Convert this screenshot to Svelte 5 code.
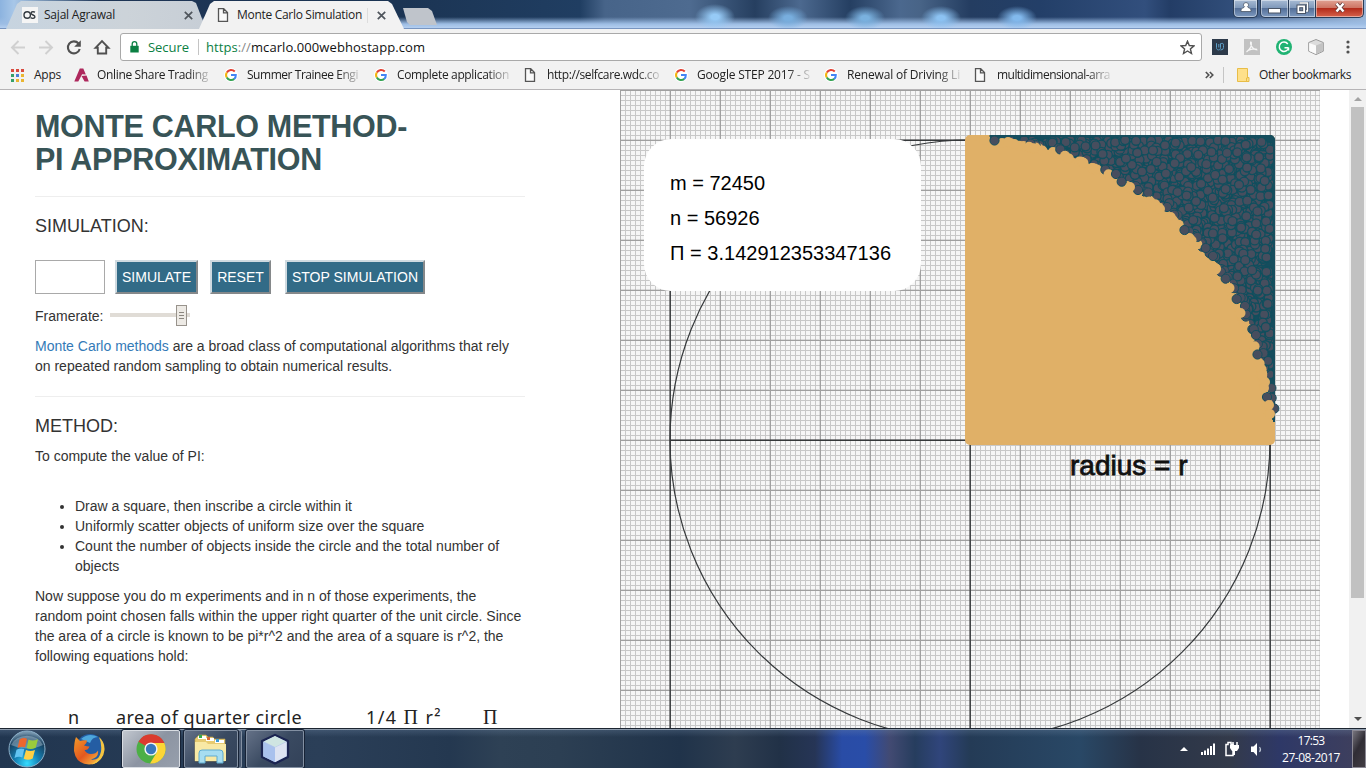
<script>
  // Spreads the letters of a label so that it takes up exactly `width` pixels.
  function fit(node, width) {
    node.style.letterSpacing = '0px';
    const natural = node.getBoundingClientRect().width;
    const count = [...node.textContent].length;
    node.style.letterSpacing = `${(width - natural) / count}px`;
  }

  const bookmarks = [
    ['axis', 'Online Share Trading', 111],
    ['google', 'Summer Trainee Engi', 111],
    ['google', 'Complete application', 112],
    ['page', 'http://selfcare.wdc.co', 112],
    ['google', 'Google STEP 2017 - S', 113],
    ['google', 'Renewal of Driving Li', 113],
    ['page', 'multidimensional-arra', 113]
  ];
  const appColors = ['#d94b3f', '#d94b3f', '#d94b3f', '#35a06a', '#4a80d8', '#eab530', '#35a06a', '#eab530', '#eab530'];

  let seed = 20170827;
  function random() {
    seed = (seed * 1664525 + 1013904223) % 4294967296;
    return seed / 4294967296;
  }

  const cx = 970;
  const cy = 440;
  const r = 300;

  const outside = [];
  while (outside.length < 1700) {
    const x = random() * r;
    const y = random() * r;
    if (x * x + y * y > (r + 2) * (r + 2)) outside.push([cx + x, cy - y]);
  }

  const rim = [];
  for (let i = 0; i < 130; i++) {
    const a = 0.1 + random() * 1.36;
    const inside = random() < 0.74;
    const d = inside ? r - random() * 2 : r + 2 + random() * 4;
    rim.push([cx + d * Math.cos(a), cy - d * Math.sin(a), inside]);
  }
  rim.push(
    [1116, 174, false], [1121.7, 181.7, false], [1138, 190, false], [1130, 187, true],
    [1146.5, 204, true], [1167, 207, false], [1160, 209, true], [1175, 224, true],
    [1184.5, 230, false], [1191.6, 240.5, true], [1205.7, 248, false], [1213, 256, false],
    [1212.5, 266, true], [1225.7, 278.7, false], [1229.5, 288, true], [1236.7, 299, false],
    [1245, 306, false], [1240.5, 313, true], [1257.5, 354.5, false], [1267, 397, false],
    [1265, 382, true], [1264, 388, true], [1269, 405, true], [1270, 414, true], [1002, 143, true], [1008, 142, true],
    [984, 140, true], [994.5, 140.5, false]
  );
</script>

{#snippet google()}
  <svg class="ico" width="14" height="14" viewBox="0 0 14 14">
    <circle cx="7" cy="7" r="7" fill="#fff" />
    <path d="M10.8 3.5A5 5 0 0 0 2.8 4.5" fill="none" stroke="#e34234" stroke-width="2" />
    <path d="M2.8 4.4A5 5 0 0 0 2.8 9.6" fill="none" stroke="#f3b50c" stroke-width="2" />
    <path d="M2.8 9.5A5 5 0 0 0 10.3 10.9" fill="none" stroke="#34a353" stroke-width="2" />
    <path d="M7 7h4.8A5 5 0 0 1 10.2 11" fill="none" stroke="#4285f4" stroke-width="2" />
  </svg>
{/snippet}

{#snippet page()}
  <svg class="ico" width="12" height="14" viewBox="0 0 12 14">
    <path d="M1.5.7h5.2l3.8 3.9v8.7h-9zM6.5.9v4h4" fill="#fafafa" stroke="#555" stroke-width="1.3" />
  </svg>
{/snippet}

{#snippet cross()}
  <svg width="9" height="9" viewBox="0 0 9 9"><path d="M.8.8l7.4 7.4M8.2.8L.8 8.2" stroke="#4f555c" stroke-width="1.7" /></svg>
{/snippet}

<div class="screen">
  <header class="titlebar">
    <div class="tab idle">
      <svg class="os" width="16" height="16" viewBox="0 0 16 16">
        <rect width="16" height="16" fill="#f5f5f5" />
        <circle cx="5.2" cy="8" r="3.2" fill="none" stroke="#333a40" stroke-width="1.4" />
        <path d="M13 5.2C10.500 4 8.500 5.200 9.400 6.900 10.200 8.200 13.200 8 12.900 10 12.500 11.800 10 11.600 8.600 10.700" fill="none" stroke="#333a40" stroke-width="1.4" />
      </svg>
      <span class="tabname"><span use:fit={71}>Sajal Agrawal</span></span>
      {@render cross()}
    </div>
    <div class="tab live">
      {@render page()}
      <span class="tabname"><span use:fit={125}>Monte Carlo Simulation</span><i class="bar"></i></span>
      {@render cross()}
    </div>
    <div class="newtab"></div>
    <div class="controls">
      <div class="ctl user">
        <svg width="12" height="11" viewBox="0 0 12 11"><path d="M6 .6a2.300 2.300 0 0 1 1.500 4.200c0 1 3.500 1.200 3.500 3.200v1.500H1V8c0-2 3.500-2.200 3.500-3.200A2.300 2.300 0 0 1 6 .6z" fill="#fff" stroke="#4a5566" stroke-width=".8" /></svg>
      </div>
      <div class="group">
        <div class="ctl min"><svg width="13" height="6" viewBox="0 0 13 6"><rect x=".5" y=".5" width="12" height="4.500" fill="#fff" stroke="#4a5566" /></svg></div>
        <div class="ctl max">
          <svg width="13" height="13" viewBox="0 0 13 13">
            <path d="M3.500 1h8v8h-2" fill="none" stroke="#4a5566" stroke-width="2.600" /><path d="M3.500 1h8v8h-2" fill="none" stroke="#fff" stroke-width="1.300" />
            <rect x="1" y="3" width="8.500" height="8.500" fill="#fff" stroke="#4a5566" /><rect x="3.700" y="5.700" width="3" height="3" fill="#7186a5" stroke="#4a5566" />
          </svg>
        </div>
        <div class="ctl close"><svg width="12" height="11" viewBox="0 0 12 11"><path d="M2.500 1.500l7 8M9.500 1.500l-7 8" stroke="#5c3535" stroke-width="4" /><path d="M2.500 1.500l7 8M9.500 1.500l-7 8" stroke="#fff" stroke-width="2.500" /></svg></div>
      </div>
    </div>
  </header>

  <div class="toolbar">
    <svg class="nav" width="112" height="33" viewBox="0 0 112 33">
      <g fill="none" stroke="#d0d0d0" stroke-width="1.900"><path d="M25 18.500H12.500M18.500 12l-6.500 6.500 6.500 6.500" /><path d="M39 18.500h12.500M45.500 12l6.500 6.500-6.500 6.500" /></g>
      <path d="M78.500 14.500a6 6 0 1 0 1.200 5.500" fill="none" stroke="#505050" stroke-width="2.100" />
      <path d="M80.800 11.200v6.600h-6.600z" fill="#505050" />
      <path d="M95.500 18.800L102 12l6.500 6.800h-2.300v5.700h-8.400v-5.700z" fill="none" stroke="#505050" stroke-width="1.900" />
    </svg>
    <div class="omnibox">
      <svg width="9" height="12" viewBox="0 0 9 12"><path d="M.3 4.800h8.400V11.500H.3z" fill="#0b8043" /><path d="M2.200 5V3a2.300 2.300 0 0 1 4.600 0v2" fill="none" stroke="#0b8043" stroke-width="1.300" /></svg>
      <span class="secure"><span use:fit={41}>Secure</span></span>
      <i class="sep"></i>
      <span class="url"><span use:fit={219}><b>https</b><em>://</em>mcarlo.000webhostapp.com</span></span>
      <svg class="star" width="15" height="15" viewBox="0 0 15 15"><path d="M7.500 1.200l1.800 4.300 4.600.4-3.500 3 1.100 4.600-4-2.500-4 2.500 1.100-4.600-3.500-3 4.600-.4z" fill="none" stroke="#505050" stroke-width="1.400" /></svg>
    </div>
    <div class="extensions">
      <svg width="16" height="16" viewBox="0 0 16 16"><rect width="16" height="16" fill="#2d3a4a" /><path d="M4.500 4.200v4.500c0 3 4 3 4 0V4.500M6.800 5v3.500M8.500 5q3-2 3 1.500v2q0 2.500-3 2.500" fill="none" stroke="#5da0c8" stroke-width="1" /></svg>
      <svg width="16" height="16" viewBox="0 0 16 16"><rect width="16" height="16" fill="#c2c2c2" /><path d="M2.500 13C5 11 8 7 7.300 3.500c-.4-1.400-1.200.2-.5 2C7.700 8.500 10 10.600 13.500 11M4 11.500c3-1.500 6-2 9-1.200" fill="none" stroke="#f6f6f6" stroke-width="1.200" /></svg>
      <svg width="16" height="16" viewBox="0 0 16 16"><circle cx="8" cy="8" r="8" fill="#20b373" /><path d="M11.800 5A4.700 4.700 0 1 0 12.600 8.500M8.500 8.800h4M12.500 8.500v3" fill="none" stroke="#fff" stroke-width="1.500" /></svg>
      <svg width="16" height="16" viewBox="0 0 16 16"><path d="M8 .5l7.300 3v8.700L8 15.600.7 12.200V3.500z" fill="#dcdcdc" stroke="#999" /><path d="M1.200 4L8 6.600v8.400l-6.800-3z" fill="#fafafa" /><path d="M8 6.600l6.800-2.800v8.200L8 15z" fill="#c2c2c2" /></svg>
      <svg class="menu" width="4" height="14" viewBox="0 0 4 14"><g fill="#505050"><circle cx="2" cy="2" r="1.600" /><circle cx="2" cy="7" r="1.600" /><circle cx="2" cy="12" r="1.600" /></g></svg>
    </div>
  </div>

  <nav class="bookmarks">
    <div class="apps">
      <div class="appgrid">{#each appColors as c}<i style:background={c}></i>{/each}</div>
      <span use:fit={27}>Apps</span>
    </div>
    {#each bookmarks as [kind, name, width]}
      <div class="mark">
        <div class="slot">
          {#if kind === 'google'}{@render google()}{:else if kind === 'page'}{@render page()}{:else}
            <svg class="ico" width="15" height="14" viewBox="0 0 15 14"><path d="M5.800.5h3.500l2.500 6-3.700-.3L4.300 13.500H.3z M7.500 8l5-.6 2.300 6.100h-4.200z" fill="#ae285d" /></svg>
          {/if}
        </div>
        <span class="fade"><span use:fit={width}>{name}</span></span>
      </div>
    {/each}
    <div class="more">
      <svg width="9" height="8" viewBox="0 0 9 8"><path d="M.8 1l3 3-3 3M4.800 1l3 3-3 3" fill="none" stroke="#505050" stroke-width="1.600" /></svg>
      <i class="rule"></i>
      <svg width="13" height="14" viewBox="0 0 13 14"><path d="M.5.500h10v9h1.500v4H.500z" fill="#fee08a" stroke="#e8bd47" /><path d="M9.500 13v-3h1V1" fill="none" stroke="#e8bd47" /></svg>
      <span use:fit={92}>Other bookmarks</span>
    </div>
  </nav>

  <main>
    <article>
      <h2><span use:fit={372}>MONTE CARLO METHOD-</span><br /><span use:fit={287}>PI APPROXIMATION</span></h2>
      <hr />
      <h4>SIMULATION:</h4>
      <div class="form">
        <input type="text" aria-label="Points" />
        <button class="b1">SIMULATE</button>
        <button class="b2">RESET</button>
        <button class="b3">STOP SIMULATION</button>
      </div>
      <div class="rate">
        <span>Framerate:</span>
        <div class="track"><div class="thumb"><i></i><i></i><i></i></div></div>
      </div>
      <p class="intro"><a href="#top">Monte Carlo methods</a> are a broad class of computational algorithms that rely<br />on repeated random sampling to obtain numerical results.</p>
      <hr />
      <h4>METHOD:</h4>
      <p class="compute">To compute the value of PI:</p>
      <ul>
        <li>Draw a square, then inscribe a circle within it</li>
        <li>Uniformly scatter objects of uniform size over the square</li>
        <li>Count the number of objects inside the circle and the total number of<br />objects</li>
      </ul>
      <p>Now suppose you do m experiments and in n of those experiments, the<br />random point chosen falls within the upper right quarter of the unit circle. Since<br />the area of a circle is known to be pi*r^2 and the area of a square is r^2, the<br />following equations hold:</p>
      <div class="formula">
        <span class="f1">n</span>
        <span class="f2"><span use:fit={186}>area of quarter circle</span></span>
        <span class="f3"><span use:fit={76}>1/4 <b>Π</b> r²</span></span>
        <span><b>Π</b></span>
      </div>
    </article>

    <svg class="plot" width="700" height="638" viewBox="620 90 700 638">
      <defs>
        <pattern id="minor" x="620" y="90" width="5" height="5" patternUnits="userSpaceOnUse">
          <rect width="5" height="5" fill="#f6f6f6" /><path d="M0 0h5v1H0zM0 0h1v5H0z" fill="#c8c8c8" />
        </pattern>
        <pattern id="major" x="619" y="89" width="50" height="50" patternUnits="userSpaceOnUse">
          <path d="M0 0h50v2H0zM0 0h2v50H0z" fill="#999" opacity=".3" />
          <path d="M0 1h50v1H0zM1 0h1v50H1z" fill="#a0a0a0" />
        </pattern>
      </defs>
      <rect x="620" y="90" width="700" height="638" fill="url(#minor)" />
      <rect x="620" y="90" width="700" height="638" fill="url(#major)" />
      <g fill="none" stroke="#36393b" stroke-width="1.400">
        <path d="M670.200 728V140.200H1270.200V728M670 440.200H970.200M970.200 440V728" />
        <circle cx="970" cy="440" r="300" stroke-width="1.200" />
      </g>
      <rect x="644" y="139" width="277" height="152" rx="27" fill="#fff" />
      <g class="stats">
        <text x="670" y="190">m = 72450</text>
        <text x="670" y="225">n = 56926</text>
        <text x="670" y="260" textLength="221">Π = 3.142912353347136</text>
      </g>
      <rect x="965" y="135" width="310" height="310" rx="5" fill="#e0b067" />
      <path d="M990 135H1270a5 5 0 0 1 5 5V420H1270A300 300 0 0 0 990 140.500z" fill="#154d5d" />
      {#each outside as [x, y]}<circle cx={x} cy={y} r="4.500" fill="#474e5e" stroke="#104f5e" stroke-width="1.300" />{/each}
      <path d="M965 440V140H970A301 301 0 0 1 1273 440z" fill="#e0b067" />
      <path d="M989.500 135H1270a5 5 0 0 1 5 5V422h-2V137H989.500z" fill="#154d5d" />
      {#each rim as [x, y, inside]}
        <circle cx={x} cy={y} r={inside ? 5 : 4.600} fill={inside ? '#e0b067' : '#474e5e'} stroke={inside ? 'none' : '#154d5d'} stroke-width="1" />
      {/each}
      <text class="radius" x="1070" y="475">radius = r</text>
    </svg>

    <div class="scroll">
      <i class="up"></i>
      <div class="grip"></div>
      <i class="down"></i>
    </div>
  </main>

  <footer>
    <div class="launch">
      <svg class="orb" width="38" height="38" viewBox="0 0 38 38">
        <defs>
          <radialGradient id="orb" cx=".5" cy=".9" r=".85"><stop offset="0" stop-color="#35dcff" /><stop offset=".4" stop-color="#1581b5" /><stop offset=".8" stop-color="#17405f" /><stop offset="1" stop-color="#7493ab" /></radialGradient>
        </defs>
        <circle cx="19" cy="19" r="18" fill="url(#orb)" stroke="#8db1ca" />
        <path d="M3 15a17 14 0 0 1 32 0q-15 7-32 0" fill="#c7d9e6" opacity=".4" />
        <path d="M11.500 9.500q4-2.500 7.500-.8l-2 8.500q-3.500-1.300-7.500.8z" fill="#ec672e" />
        <path d="M20.500 9.500q4 2 9.500-.3l-2.300 8.500q-5 2.300-9 .3z" fill="#9acb3b" />
        <path d="M8.500 19.700q4-2 7.800-.7l-2 8.500q-3.500-1.700-7.800.5z" fill="#62c4f2" />
        <path d="M18 20q4 2 9 0l-2.300 8.500q-4.500 2.300-9 .3z" fill="#ffd044" />
      </svg>
      <svg class="fox" width="32" height="32" viewBox="0 0 32 32">
        <defs><linearGradient id="fox" x2="1" y2="1"><stop offset="0" stop-color="#f29a28" /><stop offset=".5" stop-color="#e4581f" /><stop offset="1" stop-color="#ffd94d" /></linearGradient></defs>
        <circle cx="17" cy="15" r="14" fill="#245da3" /><path d="M8 6Q16-1 25 4q-6 0-8 6z" fill="#4da7dc" />
        <path d="M3 4l4 4q3-1 7-.5 0 3-3 5 3 1 5.500 1-1.500 4-5 3.500 2 4 6.500 4 5 0 7-3.500 1 7-7 9 7 1 12-6-3 11-14 11Q3 31 1 18 1 9 3 4z" fill="url(#fox)" />
        <path d="M26 4q6 5 5.500 13-1 11-13 14.500 8-5 9.500-13 1-8-2-14.500z" fill="#f5c440" />
      </svg>
      <div class="task current">
        <svg width="30" height="30" viewBox="0 0 30 30">
          <circle cx="15" cy="15" r="14.500" fill="#4caf45" />
          <path d="M15 15L2.500 7.700A14.500 14.500 0 0 1 28.500 9H15z" fill="#db3b2f" />
          <path d="M15 9h13.300A14.500 14.500 0 0 1 14 29.500L21 18z" fill="#fcd535" />
          <circle cx="15" cy="15" r="6.600" fill="#f4f4f4" /><circle cx="15" cy="15" r="5.200" fill="#3778bd" />
        </svg>
      </div>
      <div class="task stack">
        <svg width="34" height="32" viewBox="0 0 34 32">
          <path d="M3 4l2-2h7l2 2h5l1 2h11v22H1V6z" fill="#e7cb70" stroke="#bfa34e" stroke-width=".6" />
          <path d="M4 3h8v3H4zM12 5h8v3h-8zM21 7h9v3h-9z" fill="#fff" /><path d="M5 2h3v3H5z" fill="#35a94a" /><path d="M13 4h3v3h-3z" fill="#d86632" /><path d="M22 6h3v3h-3z" fill="#3d9bd4" />
          <path d="M1 9h11l2 2h18v17H1z" fill="#f8e9a5" />
          <path d="M5 30V20q0-3 3-3h18q3 0 3 3v10h-6v-7H11v7z" fill="#a7ddf0" stroke="#5eabd0" />
        </svg>
      </div>
      <div class="task">
        <svg width="32" height="32" viewBox="0 0 32 32">
          <path d="M16 2l13 6v16L16 30.500 3 24V8z" fill="#b6c9eb" stroke="#1b2451" stroke-width="2.300" stroke-linejoin="round" />
          <path d="M16 3l11 5.500L16 14 5 8.500z" fill="#cfe5e2" /><path d="M4.500 9L16 14.500V29L4.500 23.500z" fill="#a9c1ed" /><path d="M16 14.500L27.500 9v14L16 29z" fill="#dde3f2" />
        </svg>
      </div>
    </div>
    <div class="tray">
      <svg width="84" height="18" viewBox="0 0 84 18">
        <path d="M0 11l4-4 4 4z" fill="#fff" />
        <path d="M21 12h2v3h-2zM24 10.500h2V15h-2zM27 8.500h2V15h-2zM30 6h2v9h-2zM33 3.500h2V15h-2z" fill="#fff" />
        <path d="M48 2.500h3v2h2v11h-7v-11h2z" fill="none" stroke="#fff" stroke-width="1.500" />
        <path d="M53 2v3M57 2v3" stroke="#fff" stroke-width="1.500" /><path d="M50 5h9v3l-2 3h-2v4h-2v-4h-1l-2-3z" fill="#fff" />
        <path d="M71 6.500h2.500L77 3v13l-3.500-4H71z" fill="#fff" /><path d="M79.500 7q2 2.500 0 5" fill="none" stroke="#b9c3d2" stroke-width="1.200" />
      </svg>
      <div class="clock"><span use:fit={27}>17:53</span><span use:fit={58}>27-08-2017</span></div>
      <div class="peek"></div>
    </div>
  </footer>
</div>

<style>
  :global(body) { margin: 0; overflow: hidden; background: #fff; }
  .screen { width: 1366px; height: 768px; display: flex; flex-direction: column; overflow: hidden; font: 12px/16px "Open Sans", "Noto Sans", sans-serif; color: #222; }
  .screen :global(svg) { display: block; flex: none; }
  span { white-space: nowrap; }

  .titlebar {
    height: 29px; box-sizing: border-box; display: flex; align-items: flex-start; border-bottom: 1px solid #7895c0;
    background:
      radial-gradient(ellipse 20px 13px at 715px 17px, #96caf6 20%, transparent),
      radial-gradient(ellipse 20px 12px at 788px 18px, #78aede 20%, transparent),
      radial-gradient(ellipse 20px 12px at 865px 18px, #7ab1df 20%, transparent),
      radial-gradient(ellipse 20px 12px at 941px 18px, #8cc2f2 20%, transparent),
      radial-gradient(ellipse 20px 12px at 1017px 18px, #82b9ed 20%, transparent),
      linear-gradient(180deg, transparent 17px, #9dbde4 24px, #b5cff0 28px),
      linear-gradient(90deg, #8cb3df, #a8c7e8 14px, #1e3555 100px, #1b3453 400px, #203e62 580px, #476489 605px, #4e6b90 690px, #263f60 755px, #4c698f 800px, #253f62 850px, #4b688e 900px, #486487 920px, #243d61 970px, #233f68 1040px, #324f7d 1145px, #233d66 1170px, #314e7a 1233px, #99b5d7);
  }
  .tab { height: 28px; margin-top: 1px; box-sizing: border-box; display: flex; align-items: center; }
  .idle { width: 200px; margin-left: 6px; padding-left: 16px; background: linear-gradient(90deg, #c7d4e0, #ccd3d9 60%, #c7ced6); clip-path: polygon(0 100%, 11px 3px, 15px 0, 186px 0, 190px 2px, 200px 100%); }
  .live { width: 205px; margin-left: -7px; padding-left: 18px; background: #f2f2f2; clip-path: polygon(0 100%, 11px 3px, 15px 0, 189px 0, 193px 3px, 205px 100%); }
  .tab .tabname { width: 140px; margin-left: 6px; display: flex; align-items: center; }
  .live .tabname { width: 132px; margin-left: 8px; margin-right: 8px; }
  .live .bar { width: 1px; height: 15px; background: #ddd; margin-left: 5px; }
  .newtab { width: 34px; height: 17px; margin: 8px 0 0 -1px; background: #bfc4cb; clip-path: polygon(0 0, 25px 0, 29px 3px, 34px 100%, 7px 100%, 4px 14px); }
  .controls { margin-left: auto; margin-right: 2px; display: flex; gap: 2px; }
  .ctl { box-sizing: border-box; height: 18px; display: flex; align-items: center; justify-content: center; border: 1px solid #2a3d58; border-top: 0; background: linear-gradient(#a7bbd4, #8099bb 45%, #546f98 50%, #7e9ac0); box-shadow: inset 0 0 0 1px rgba(255, 255, 255, .45); }
  .user { width: 25px; border-radius: 0 0 5px 5px; padding-bottom: 2px; }
  .group { display: flex; }
  .min { width: 29px; border-radius: 0 0 0 5px; padding-top: 4px; }
  .max { width: 27px; border-left: 0; padding-bottom: 1px; }
  .close { width: 48px; border-left: 0; border-radius: 0 0 5px 0; background: linear-gradient(#e0a293, #ce7564 45%, #b32c1b 50%, #d6624c); padding-bottom: 2px; }

  .toolbar { height: 33px; display: flex; align-items: flex-start; background: #f2f2f2; }
  .nav { width: 112px; height: 33px; margin-right: 8px; }
  .omnibox { width: 1082px; height: 28px; margin-top: 4px; box-sizing: border-box; border: 1px solid #a9a9a9; border-radius: 3px; background: #fff; display: flex; align-items: center; padding: 0 6px 0 9px; font-size: 13px; }
  .secure { width: 41px; margin-left: 9px; color: #0b8043; }
  .sep { width: 1px; height: 16px; margin: 0 7px 0 9px; background: #c4c4c4; }
  .url { color: #111; }
  .url b { font-weight: 400; color: #0b8043; }
  .url em { font-style: normal; color: #888; }
  .star { margin-left: auto; }
  .extensions { display: flex; align-items: center; gap: 16px; margin: 10px 0 0 10px; }
  .extensions .menu { margin-left: 6px; }

  .bookmarks { height: 28px; box-sizing: border-box; border-bottom: 1px solid #b6b4b6; background: #f2f2f2; display: flex; align-items: center; padding-bottom: 1px; }
  .apps { width: 72px; display: flex; align-items: center; box-sizing: border-box; padding-left: 11px; gap: 10px; }
  .appgrid { display: grid; grid-template-columns: repeat(3, 3px); grid-auto-rows: 3px; gap: 2px; }
  .mark { width: 150px; display: flex; align-items: center; }
  .slot { width: 25px; box-sizing: border-box; padding-left: 2px; }
  .fade { width: 114px; overflow: hidden; mask-image: linear-gradient(90deg, #000 90px, transparent 117px); }
  .more { display: flex; align-items: center; padding-left: 83px; }
  .rule { width: 1px; height: 16px; background: #c5c5c5; margin: 0 13px 0 9px; }
  .more span { margin-left: 9px; }

  main { height: 638px; display: flex; background: #fff; }
  article { width: 620px; height: 638px; box-sizing: border-box; padding: 20px 95px 0 35px; overflow: hidden; font: 14px/20px "Liberation Sans", Arial, sans-serif; color: #333; }
  h2 { margin: 0 0 20px; font-size: 30.500px; line-height: 33px; font-weight: 700; color: #385457; }
  hr { width: 490px; height: 1px; border: 0; margin: 20px 0 19px; background: #eee; }
  h4 { margin: 0; font-size: 18px; line-height: 20px; font-weight: 400; color: #333; }
  .form { display: flex; margin-top: 24px; height: 34px; }
  input { width: 70px; height: 34px; box-sizing: border-box; border: 1px solid #a9a9a9; margin: 0 10px 0 0; padding: 0; }
  button { box-sizing: border-box; height: 34px; padding: 0; border: 2px solid; border-color: #cfdae0 #85888a #85888a #cfdae0; background: #326b87; color: #fff; font: 14px "Liberation Sans", Arial, sans-serif; white-space: nowrap; }
  .b1 { width: 83px; margin-right: 12px; }
  .b2 { width: 61px; margin-right: 14px; }
  .b3 { width: 140px; }
  .rate { display: flex; align-items: center; height: 20px; margin-top: 12px; }
  .track { width: 80px; height: 4px; margin: 0 0 2px 7px; background: #e0dcd6; display: flex; align-items: center; }
  .thumb { width: 11px; height: 21px; box-sizing: border-box; margin-left: 66px; background: #edeae5; border: 1px solid #98938c; display: flex; flex-direction: column; align-items: center; justify-content: center; gap: 2px; }
  .thumb i { width: 5px; height: 1px; background: #8a867f; }
  p { margin: 0 0 10px; white-space: nowrap; }
  .intro { margin: 10px 0 20px; }
  .intro a { color: #337ab7; text-decoration: none; }
  .compute { margin: 10px 0 30px; }
  ul { margin: 0 0 10px; padding-left: 40px; white-space: nowrap; }
  .formula { display: flex; margin-top: 39px; padding-left: 33px; font: 18px/24px "Noto Sans", "Open Sans", sans-serif; color: #222; }
  .formula b { font-family: "Liberation Serif", serif; font-weight: 400; font-size: 20px; line-height: 20px; }
  .f1 { width: 48px; }
  .f2 { width: 250px; }
  .f3 { width: 117px; }

  .plot { display: block; }
  .stats text { font: 20px "Liberation Sans", Arial, sans-serif; fill: #000; }
  .radius { font: 28px "Liberation Sans", Arial, sans-serif; fill: #111; stroke: #111; stroke-width: .8px; }
  .scroll { margin-left: auto; width: 17px; height: 638px; background: #f1f1f1; display: flex; flex-direction: column; align-items: center; }
  .up, .down { width: 0; height: 0; border: 4px solid transparent; }
  .up { border-top: 0; border-bottom-color: #a3a3a3; margin-top: 7px; }
  .grip { width: 13px; height: 491px; margin-top: 6px; background: #c1c1c1; }
  .down { border-bottom: 0; border-top-color: #505050; margin-top: auto; margin-bottom: 7px; }

  footer {
    height: 40px; box-sizing: border-box; border-top: 1px solid #1c2531; box-shadow: inset 0 1px #8d9bac; display: flex; justify-content: space-between;
    background:
      linear-gradient(180deg, rgba(120, 145, 175, .3), transparent 8px),
      linear-gradient(90deg, #213650, #2b3f58 320px, #243850 450px, #2e4155 500px, #2c3f53 560px, #20334a 680px, #2e3d50 735px, #213147 780px, #263556 815px, #294ca6 842px, #294da8 865px, #424a72 890px, #263d5e 915px, #30457b 940px, #243b56 970px, #294866 1080px, #273347 1140px, #333a4a 1230px, #2e3867 1280px, #40405c 1366px);
  }
  .launch { display: flex; align-items: center; }
  .orb { margin-left: 8px; }
  .fox { margin: 0 17px 0 27px; }
  .task { width: 58px; height: 38px; margin: 1px 4px 0 0; box-sizing: border-box; border: 1px solid #8390a2; border-radius: 2px; background: linear-gradient(135deg, #647187, #3a4a61 50%, #334259); box-shadow: 0 0 0 1px #172336; display: flex; align-items: center; justify-content: center; }
  .current { background: linear-gradient(135deg, #c2c7cf, #8c94a2 50%, #979fac); border-color: #d8dce2; }
  .stack { width: 54px; margin-right: 8px; box-shadow: 0 0 0 1px #172336, 4px 0 0 -1px #4a5a72, 4px 0 0 0 #8390a2; }
  .tray { display: flex; align-items: center; color: #fff; }
  .clock { width: 58px; margin-left: 18px; display: flex; flex-direction: column; align-items: center; line-height: 17px; }
  .peek { width: 14px; height: 38px; margin-left: 12px; box-sizing: border-box; border: 1px solid #8b8994; background: linear-gradient(120deg, #77757e, #302d35 45%, #423d44); }
</style>
